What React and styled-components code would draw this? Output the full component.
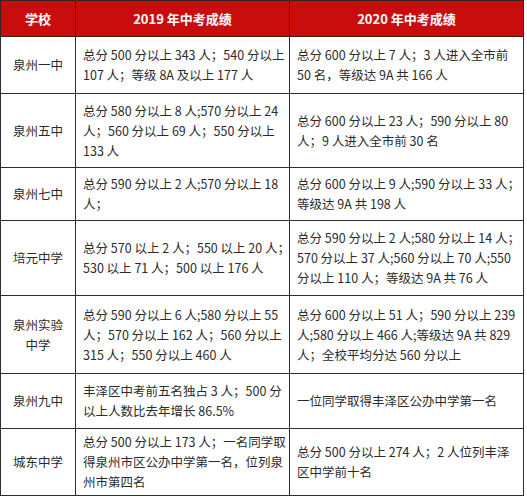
import React from 'react';
import styled, { createGlobalStyle } from 'styled-components';

const GlobalStyle = createGlobalStyle`
  body {
    margin: 0;
    background: #fff;
    font-family: "Noto Sans CJK SC", "Noto Sans", sans-serif;
  }
`;

const rows = [
  {
    school: ['泉州一中'],
    height: 57,
    y2019: ['总分 500 分以上 343 人；540 分以上', '107 人；等级 8A 及以上 177 人'],
    y2020: ['总分 600 分以上 7 人；3 人进入全市前', '50 名，等级达 9A 共 166 人'],
  },
  {
    school: ['泉州五中'],
    height: 74,
    y2019: ['总分 580 分以上 8 人;570 分以上 24', '人；560 分以上 69 人；550 分以上', '133 人'],
    y2020: ['总分 600 分以上 23 人；590 分以上 80', '人；9 人进入全市前 30 名'],
  },
  {
    school: ['泉州七中'],
    height: 53,
    y2019: ['总分 590 分以上 2 人;570 分以上 18', '人；'],
    y2020: ['总分 600 分以上 9 人;590 分以上 33 人；', '等级达 9A 共 198 人'],
  },
  {
    school: ['培元中学'],
    height: 75,
    y2019: ['总分 570 以上 2 人；550 以上 20 人；', '530 以上 71 人；500 以上 176 人'],
    y2020: [
      '总分 590 分以上 2 人;580 分以上 14 人；',
      '570 分以上 37 人;560 分以上 70 人;550',
      '分以上 110 人；等级达 9A 共 76 人',
    ],
  },
  {
    school: ['泉州实验', '中学'],
    height: 78,
    y2019: ['总分 590 分以上 6 人;580 分以上 55', '人；570 分以上 162 人；560 分以上', '315 人；550 分以上 460 人'],
    y2020: ['总分 600 分以上 51 人；590 分以上 239', '人;580 分以上 466 人;等级达 9A 共 829', '人；全校平均分达 560 分以上'],
  },
  {
    school: ['泉州九中'],
    height: 55,
    y2019: ['丰泽区中考前五名独占 3 人；500 分', '以上人数比去年增长 86.5%'],
    y2020: ['一位同学取得丰泽区公办中学第一名'],
  },
  {
    school: ['城东中学'],
    height: 67,
    y2019: ['总分 500 分以上 173 人；一名同学取', '得泉州市区公办中学第一名，位列泉', '州市第四名'],
    y2020: ['总分 500 分以上 274 人；2 人位列丰泽', '区中学前十名'],
  },
];

export default function App() {
  return (
    <>
      <GlobalStyle />
      <Table>
        <colgroup>
          <col style={{ width: 75 }} />
          <col style={{ width: 214 }} />
          <col style={{ width: 234 }} />
        </colgroup>
        <thead>
          <tr>
            <HeadCell>学校</HeadCell>
            <HeadCell>2019 年中考成绩</HeadCell>
            <HeadCell>2020 年中考成绩</HeadCell>
          </tr>
        </thead>
        <tbody>
          {rows.map((r) => (
            <Row key={r.school.join('')} $h={r.height}>
              <SchoolCell>
                {r.school.map((l) => (
                  <Line key={l}>{l}</Line>
                ))}
              </SchoolCell>
              <TextCell>
                {r.y2019.map((l) => (
                  <Line key={l}>{l}</Line>
                ))}
              </TextCell>
              <TextCell>
                {r.y2020.map((l) => (
                  <Line key={l}>{l}</Line>
                ))}
              </TextCell>
            </Row>
          ))}
        </tbody>
      </Table>
    </>
  );
}

const Table = styled.table`
  border-collapse: collapse;
  table-layout: fixed;
  width: 523px;
  border: 1px solid #2e2e2e;
`;

const HeadCell = styled.th`
  height: 35px;
  padding: 0;
  background: #c90d0d;
  color: #fff;
  font-size: 13px;
  font-weight: 700;
  text-align: center;
  vertical-align: middle;
  border: 1px solid #3a2020;
`;

const Row = styled.tr`
  height: ${(p) => p.$h}px;
`;

const Cell = styled.td`
  padding: 0 6px 0 7px;
  vertical-align: middle;
  border: 1px solid #2e2e2e;
  color: #2b2b2b;
  font-size: 12.5px;
  line-height: 20px;
`;

const SchoolCell = styled(Cell)`
  text-align: center;
  padding: 0;
`;

const TextCell = styled(Cell)`
  text-align: left;
`;

const Line = styled.div`
  white-space: nowrap;
`;
